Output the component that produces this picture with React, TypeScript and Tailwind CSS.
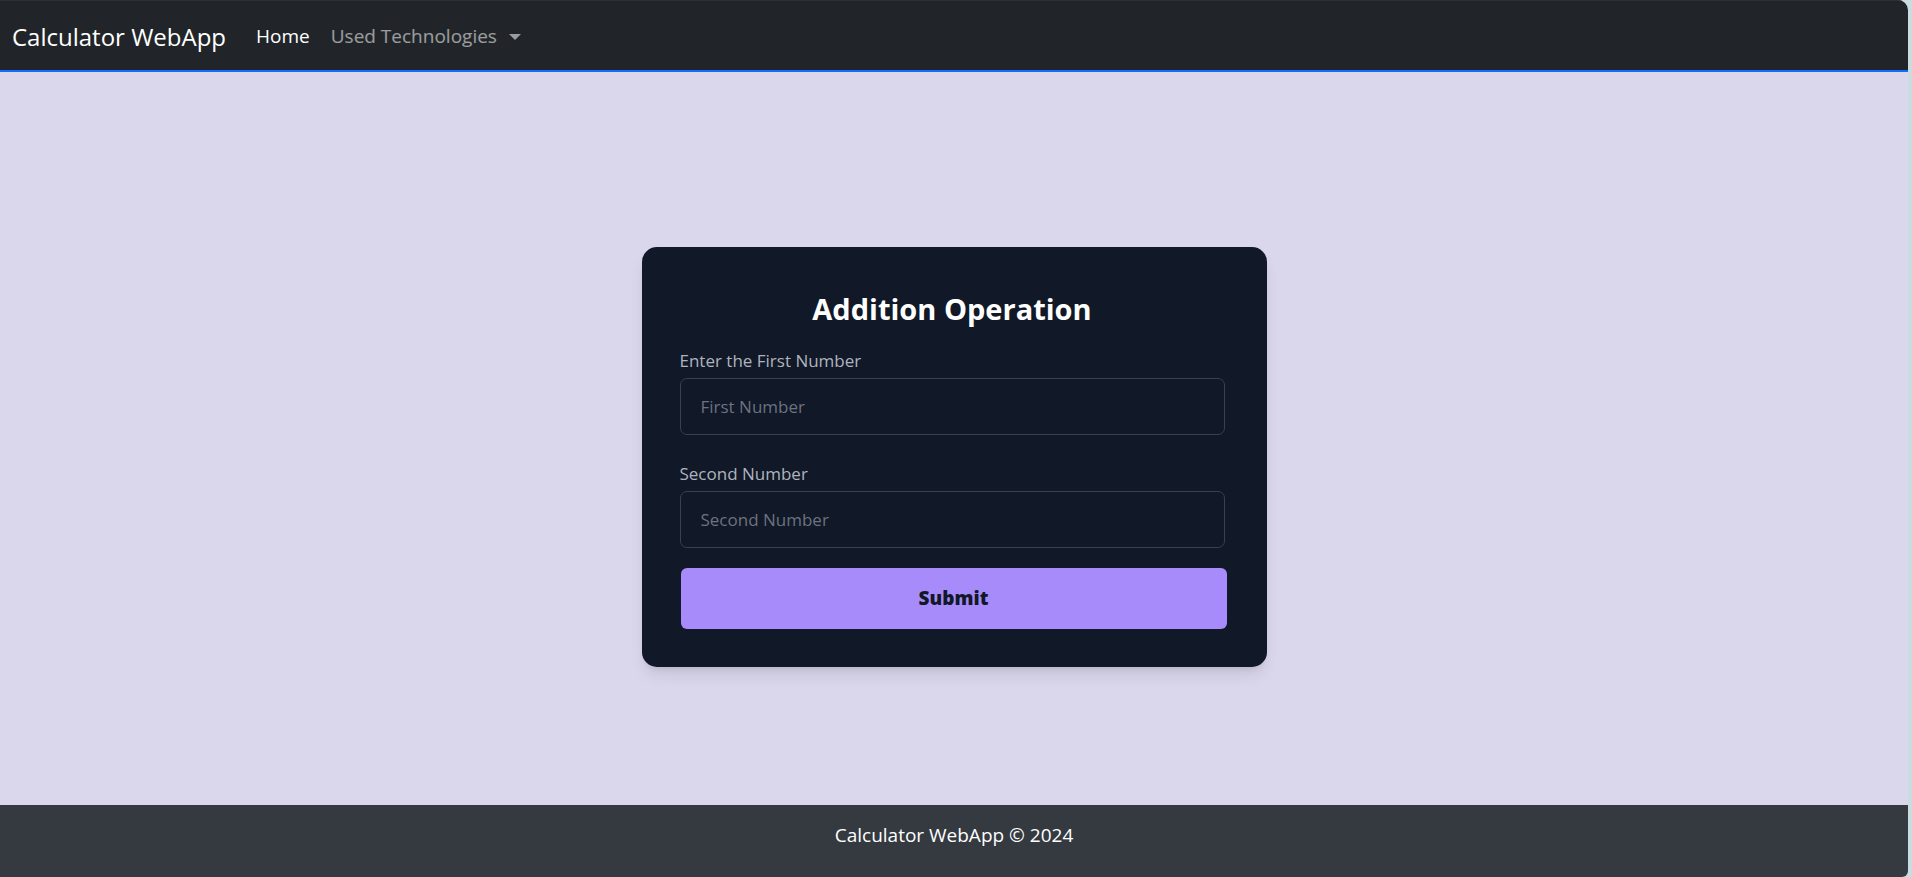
import React from 'react';

export default function App() {
  return (
    <div className="min-h-screen bg-[#c9dde1] font-['Open_Sans',sans-serif]">
      <div className="w-[1908px] h-[877px] flex flex-col bg-[#dad6ec] rounded-tr-[10px] rounded-br-[6px] overflow-hidden">
        {/* Navbar */}
        <nav className="h-[72px] shrink-0 bg-[#212529] border-t border-[#2c3034] border-b-2 border-b-[#0d6efd] flex items-center px-[12px] pt-[2px]">
          <span className="text-[24px] text-white mr-[30px]">Calculator WebApp</span>
          <a href="#" className="text-[19px] text-white mr-[21px]">Home</a>
          <button className="text-[19px] text-white/55 flex items-center gap-[12px]">
            Used Technologies
            <span className="w-0 h-0 border-l-[6px] border-r-[6px] border-t-[6px] border-l-transparent border-r-transparent border-t-white/55" />
          </button>
        </nav>

        {/* Main */}
        <main className="flex-1 flex justify-center items-start pt-[175px]">
          <div className="w-[625px] h-[420px] bg-[#111827] rounded-[15px] shadow-lg pl-[38px] pr-[42px] pt-[38px]">
            <h2 className="text-center text-white font-bold text-[29px] leading-[48px] mb-[16px]">Addition Operation</h2>
            <form className="flex flex-col">
              <label className="text-[#aeb4bf] text-[17px] leading-[24px] mb-[5px]">Enter the First Number</label>
              <input
                type="text"
                placeholder="First Number"
                className="h-[57px] rounded-[7px] border border-[#374151] bg-[#111827] px-[20px] text-[17px] text-white placeholder:text-[#6b7280] outline-none"
              />
              <label className="text-[#aeb4bf] text-[17px] leading-[24px] mt-[27px] mb-[5px]">Second Number</label>
              <input
                type="text"
                placeholder="Second Number"
                className="h-[57px] rounded-[7px] border border-[#374151] bg-[#111827] px-[20px] text-[17px] text-white placeholder:text-[#6b7280] outline-none"
              />
              <button
                type="button"
                className="mt-[20px] ml-[1px] mr-[-2px] h-[61px] rounded-[6px] bg-[#a78bfa] text-[#111827] font-extrabold text-[19px]"
              >
                Submit
              </button>
            </form>
          </div>
        </main>

        {/* Footer */}
        <footer className="h-[72px] shrink-0 bg-[#343a40] flex items-center justify-center pb-[11px]">
          <span className="text-white text-[19px]">Calculator WebApp © 2024</span>
        </footer>
      </div>
    </div>
  );
}
